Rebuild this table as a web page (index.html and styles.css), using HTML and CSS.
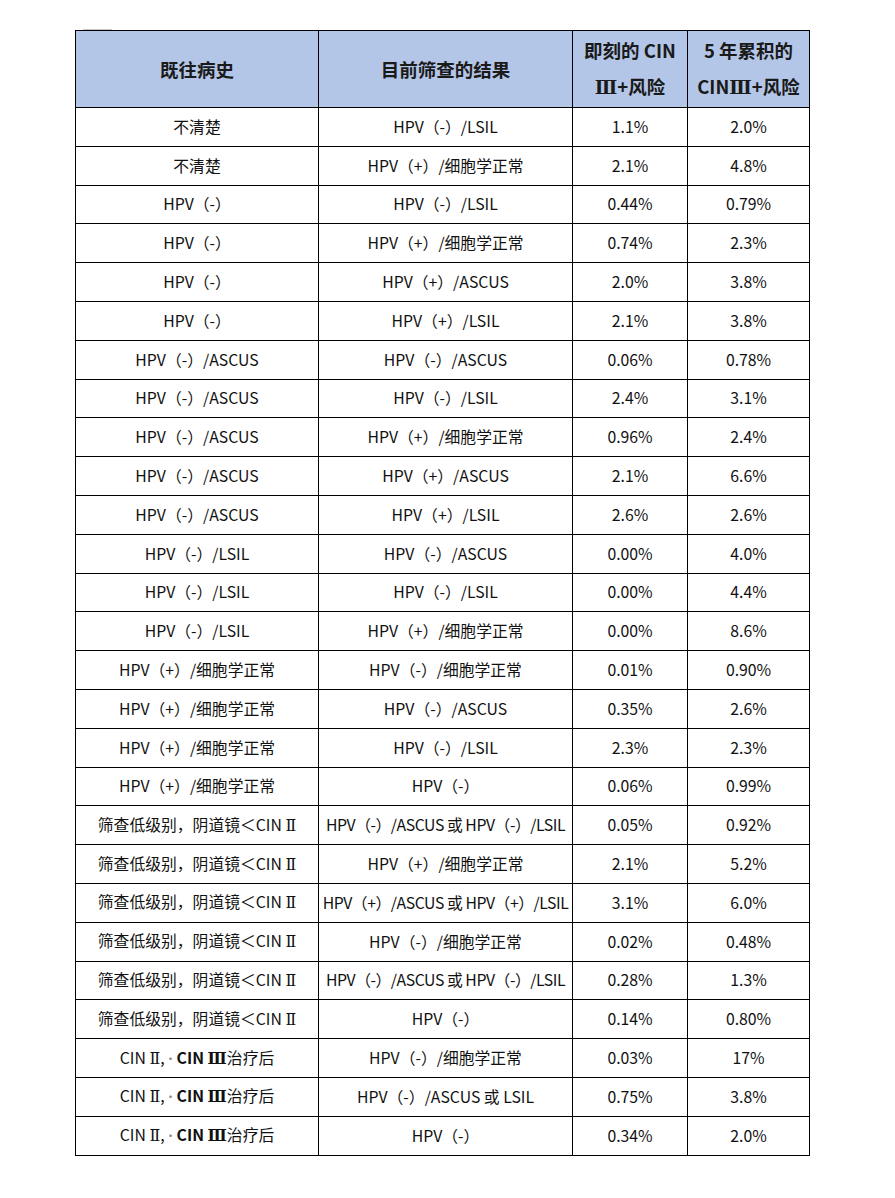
FILE: index.html
```html
<!DOCTYPE html>
<html lang="zh-CN">
<head>
<meta charset="utf-8">
<title>CIN III+ 风险</title>
<link rel="stylesheet" href="styles.css">
</head>
<body>
<div class="page">
  <span class="mark mark-tl"></span>
  <table class="risk">
    <colgroup>
      <col class="c1"><col class="c2"><col class="c3"><col class="c4">
    </colgroup>
    <thead>
      <tr>
        <th>既往病史</th>
        <th>目前筛查的结果</th>
        <th class="two">即刻的 CIN<br><span class="rn">Ⅲ</span>+风险</th>
        <th class="two">5&nbsp;年累积的<br>CIN<span class="rn">Ⅲ</span>+风险</th>
      </tr>
    </thead>
    <tbody>
      <tr><td>不清楚</td><td>HPV（-）/LSIL</td><td>1.1%</td><td>2.0%</td></tr>
      <tr><td>不清楚</td><td>HPV（+）/细胞学正常</td><td>2.1%</td><td>4.8%</td></tr>
      <tr><td>HPV（-）</td><td>HPV（-）/LSIL</td><td>0.44%</td><td>0.79%</td></tr>
      <tr><td>HPV（-）</td><td>HPV（+）/细胞学正常</td><td>0.74%</td><td>2.3%</td></tr>
      <tr><td>HPV（-）</td><td>HPV（+）/ASCUS</td><td>2.0%</td><td>3.8%</td></tr>
      <tr><td>HPV（-）</td><td>HPV（+）/LSIL</td><td>2.1%</td><td>3.8%</td></tr>
      <tr><td>HPV（-）/ASCUS</td><td>HPV（-）/ASCUS</td><td>0.06%</td><td>0.78%</td></tr>
      <tr><td>HPV（-）/ASCUS</td><td>HPV（-）/LSIL</td><td>2.4%</td><td>3.1%</td></tr>
      <tr><td>HPV（-）/ASCUS</td><td>HPV（+）/细胞学正常</td><td>0.96%</td><td>2.4%</td></tr>
      <tr><td>HPV（-）/ASCUS</td><td>HPV（+）/ASCUS</td><td>2.1%</td><td>6.6%</td></tr>
      <tr><td>HPV（-）/ASCUS</td><td>HPV（+）/LSIL</td><td>2.6%</td><td>2.6%</td></tr>
      <tr><td>HPV（-）/LSIL</td><td>HPV（-）/ASCUS</td><td>0.00%</td><td>4.0%</td></tr>
      <tr><td>HPV（-）/LSIL</td><td>HPV（-）/LSIL</td><td>0.00%</td><td>4.4%</td></tr>
      <tr><td>HPV（-）/LSIL</td><td>HPV（+）/细胞学正常</td><td>0.00%</td><td>8.6%</td></tr>
      <tr><td>HPV（+）/细胞学正常</td><td>HPV（-）/细胞学正常</td><td>0.01%</td><td>0.90%</td></tr>
      <tr><td>HPV（+）/细胞学正常</td><td>HPV（-）/ASCUS</td><td>0.35%</td><td>2.6%</td></tr>
      <tr><td>HPV（+）/细胞学正常</td><td>HPV（-）/LSIL</td><td>2.3%</td><td>2.3%</td></tr>
      <tr><td>HPV（+）/细胞学正常</td><td>HPV（-）</td><td>0.06%</td><td>0.99%</td></tr>
      <tr><td>筛查低级别，阴道镜＜CIN <span class="rn thin">Ⅱ</span></td><td class="tight">HPV（-）/ASCUS 或 HPV（-）/LSIL</td><td>0.05%</td><td>0.92%</td></tr>
      <tr><td>筛查低级别，阴道镜＜CIN <span class="rn thin">Ⅱ</span></td><td>HPV（+）/细胞学正常</td><td>2.1%</td><td>5.2%</td></tr>
      <tr><td>筛查低级别，阴道镜＜CIN <span class="rn thin">Ⅱ</span></td><td class="tight">HPV（+）/ASCUS 或 HPV（+）/LSIL</td><td>3.1%</td><td>6.0%</td></tr>
      <tr><td>筛查低级别，阴道镜＜CIN <span class="rn thin">Ⅱ</span></td><td>HPV（-）/细胞学正常</td><td>0.02%</td><td>0.48%</td></tr>
      <tr><td>筛查低级别，阴道镜＜CIN <span class="rn thin">Ⅱ</span></td><td class="tight">HPV（-）/ASCUS 或 HPV（-）/LSIL</td><td>0.28%</td><td>1.3%</td></tr>
      <tr><td>筛查低级别，阴道镜＜CIN <span class="rn thin">Ⅱ</span></td><td>HPV（-）</td><td>0.14%</td><td>0.80%</td></tr>
      <tr><td>CIN <span class="rn thin">Ⅱ</span>,<span class="dot">·</span><b>CIN <span class="rn">Ⅲ</span></b>治疗后</td><td>HPV（-）/细胞学正常</td><td>0.03%</td><td>17%</td></tr>
      <tr><td>CIN <span class="rn thin">Ⅱ</span>,<span class="dot">·</span><b>CIN <span class="rn">Ⅲ</span></b>治疗后</td><td>HPV（-）/ASCUS 或 LSIL</td><td>0.75%</td><td>3.8%</td></tr>
      <tr><td>CIN <span class="rn thin">Ⅱ</span>,<span class="dot">·</span><b>CIN <span class="rn">Ⅲ</span></b>治疗后</td><td>HPV（-）</td><td>0.34%</td><td>2.0%</td></tr>
    </tbody>
  </table>
</div>
</body>
</html>
```
FILE: styles.css
```css
html, body {
  margin: 0;
  padding: 0;
  background: #ffffff;
}

.page {
  position: relative;
  padding: 30px 0 0 75px;
}

.mark {
  position: absolute;
  display: block;
  height: 1px;
  background: #c8c8c8;
}

.mark-tl {
  left: 83px;
  top: 29px;
  width: 29px;
}

.risk {
  border-collapse: collapse;
  table-layout: fixed;
  width: 734px;
  font-family: "Noto Sans CJK SC", "Noto Sans", sans-serif;
  font-size: 15.8px;
  color: #111111;
}

.c1 { width: 243px; }
.c2 { width: 254px; }
.c3 { width: 115px; }
.c4 { width: 122px; }

.risk th,
.risk td {
  border: 1px solid #000000;
  text-align: center;
  vertical-align: middle;
  padding: 0;
  white-space: nowrap;
}

.risk th {
  background: #b4c6e7;
  height: 76px;
  font-weight: 700;
  font-size: 18.5px;
  color: #1a1a1a;
}

.risk th.two {
  line-height: 36px;
}

.rn {
  font-family: "DejaVu Serif", "Noto Sans CJK SC", serif;
  font-weight: 700;
}

.rn.thin {
  font-weight: 400;
}

.risk td {
  height: 37.8px;
  line-height: 20px;
}

.risk td.tight {
  letter-spacing: -0.45px;
}

.dot {
  color: #888888;
  font-size: 12px;
}

.risk td b {
  font-weight: 700;
}
```
